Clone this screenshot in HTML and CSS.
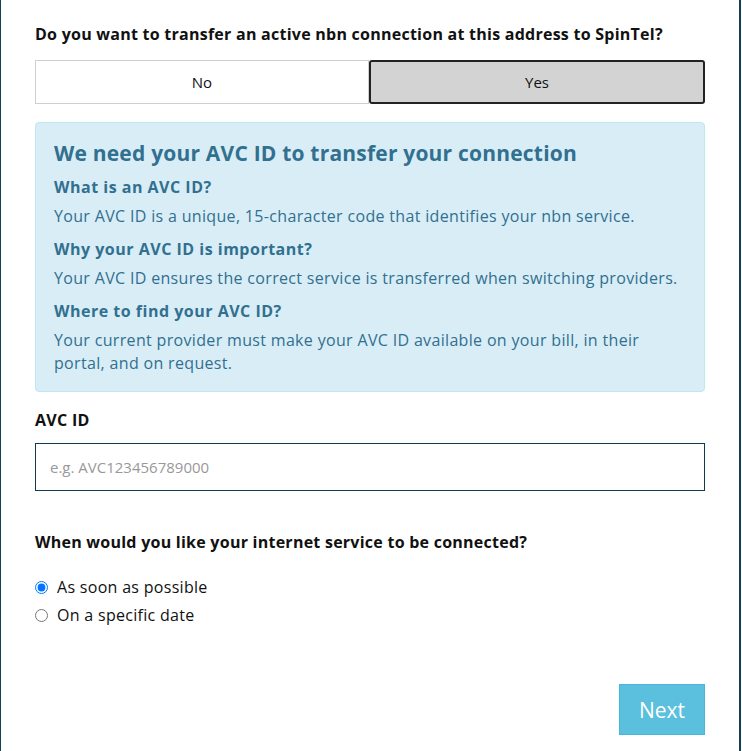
FILE: index.html
```html
<!DOCTYPE html>
<html>
<head>
<meta charset="utf-8">
<link rel="stylesheet" href="styles.css">
</head>
<body>
<div class="frame">
  <div class="content">
    <h2 class="q q1">Do you want to transfer an active nbn connection at this address to SpinTel?</h2>
    <div class="seg">
      <button class="seg-btn">No</button>
      <button class="seg-btn active">Yes</button>
    </div>
    <div class="info">
      <h3 class="info-title">We need your AVC ID to transfer your connection</h3>
      <h4 class="info-sub">What is an AVC ID?</h4>
      <p class="info-text">Your AVC ID is a unique, 15-character code that identifies your nbn service.</p>
      <h4 class="info-sub">Why your AVC ID is important?</h4>
      <p class="info-text">Your AVC ID ensures the correct service is transferred when switching providers.</p>
      <h4 class="info-sub">Where to find your AVC ID?</h4>
      <p class="info-text">Your current provider must make your AVC ID available on your bill, in their portal, and on request.</p>
    </div>
    <label class="label" for="avc">AVC ID</label>
    <input id="avc" class="input" type="text" placeholder="e.g. AVC123456789000">
    <h2 class="q q2">When would you like your internet service to be connected?</h2>
    <div class="radios">
      <label class="radio"><input type="radio" name="when" checked> As soon as possible</label>
      <label class="radio"><input type="radio" name="when"> On a specific date</label>
    </div>
    <div class="actions">
      <button class="next">Next</button>
    </div>
  </div>
</div>
</body>
</html>
```
FILE: styles.css
```css
* { box-sizing: border-box; }
html, body { margin: 0; padding: 0; background: #fff; }
body { font-family: "Open Sans", "Liberation Sans", sans-serif; color: #111; }
.frame {
  width: 741px;
  height: 751px;
  border-left: 1px solid #0d4356;
  border-right: 2px solid #0d4356;
  overflow: hidden;
}
.content {
  padding: 24px 34px 0 34px;
  display: flex;
  flex-direction: column;
}
.q {
  margin: 0;
  font-size: 16px;
  letter-spacing: 0.25px;
  font-weight: 700;
  color: #111;
  line-height: 20px;
}
.seg {
  margin-top: 16px;
  display: flex;
  height: 44px;
}
.seg-btn {
  flex: 1;
  font-family: inherit;
  font-size: 15px;
  color: #111;
  background: #fff;
  border: 1px solid #cfcfcf;
}
.seg-btn.active {
  background: #d3d3d3;
  border: 2px solid #222;
  border-radius: 3px;
}
.info {
  margin-top: 18px;
  background: #d9edf7;
  border: 1px solid #bce8f1;
  border-radius: 4px;
  padding: 17px 18px 16px 18px;
  color: #31708f;
}
.info-title {
  margin: 0 0 10px;
  font-size: 21px;
  letter-spacing: 0.2px;
  font-weight: 700;
  line-height: 26px;
}
.info-sub {
  margin: 0;
  font-size: 16px;
  letter-spacing: 0.5px;
  font-weight: 700;
  line-height: 22px;
}
.info-text {
  margin: 7px 0 10px;
  font-size: 16px;
  letter-spacing: 0.33px;
  line-height: 23px;
}
.info-text:last-child { margin-bottom: 0; }
.label {
  margin-top: 17px;
  font-size: 16px;
  letter-spacing: 0.3px;
  font-weight: 700;
  line-height: 22px;
}
.input {
  margin-top: 12px;
  height: 48px;
  border: 1px solid #0d3d4f;
  padding: 0 14px;
  font-family: inherit;
  font-size: 15px;
  outline: none;
}
.input::placeholder { color: #999; }
.q2 { margin-top: 41px; }
.radios {
  margin-top: 24px;
  display: flex;
  flex-direction: column;
  gap: 6px;
}
.radio {
  display: flex;
  align-items: center;
  gap: 9px;
  font-size: 16px;
  letter-spacing: 0.3px;
  line-height: 22px;
  color: #111;
}
.radio input { margin: 0; width: 13px; height: 13px; }
.actions {
  margin-top: 58px;
  display: flex;
  justify-content: flex-end;
}
.next {
  width: 86px;
  height: 51px;
  background: #5bc0de;
  border: 1px solid #46b8da;
  color: #fff;
  font-family: inherit;
  font-size: 21px;
}
```
